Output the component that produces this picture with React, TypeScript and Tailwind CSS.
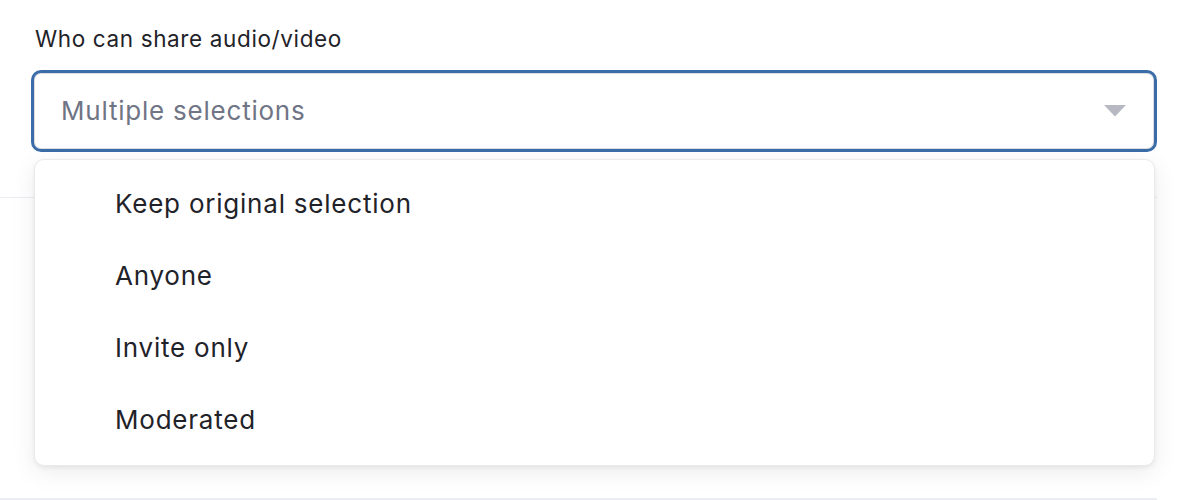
import { useState } from 'react'

// ─── Options ─────────────────────────────────────────────────────
const options = ['Keep original selection', 'Anyone', 'Invite only', 'Moderated']

function Caret() {
  return (
    <svg width="22" height="12" viewBox="0 0 22 12" className="shrink-0">
      <path d="M0 0 H22 L11 11.5 Z" fill="#b6b9c1" />
    </svg>
  )
}

export default function App() {
  const [open] = useState(true)

  return (
    <div className="h-[500px] w-[1194px] overflow-hidden bg-white font-['Inter',sans-serif]">
      <div className="relative w-[1157px]">
        {/* ─── Field ─────────────────────────────────────── */}
        <div className="pl-[35px] pt-[25px]">
          <label className="block text-[22.5px] leading-[28px] tracking-[0.028em] text-[#1f2329]">
            Who can share audio/video
          </label>
        </div>
        <div className="ml-[31px] mt-[17px] flex h-[82px] w-[1126px] items-center justify-between rounded-[10px] border-[3px] border-[#3a6ca8] bg-white pb-[1px] pl-[27px] pr-[28px] shadow-[inset_0_0_0_1px_#dcdde2]">
          <span className="text-[26px] tracking-[0.03em] text-[#707585]">Multiple selections</span>
          <Caret />
        </div>

        {/* ─── Rows underneath ───────────────────────────── */}
        <div className="mt-[45px] h-[304px] border-t-[1.5px] border-b-[3px] border-[#ececf3]" />

        {/* ─── Menu ─────────────────────────────────────── */}
        {open && (
          <div className="absolute left-[34px] top-[159px] w-[1121px] rounded-[10px] border border-[#e9eaee] bg-white pt-[7px] pb-[10px] shadow-[0_6px_24px_rgba(0,0,0,0.08),0_2px_4px_rgba(0,0,0,0.06)]">
            {options.map((opt) => (
              <div key={opt} className="flex h-[72px] items-center pl-[80px] text-[26px] tracking-[0.03em] text-[#1f2329]">
                {opt}
              </div>
            ))}
          </div>
        )}
      </div>
    </div>
  )
}
